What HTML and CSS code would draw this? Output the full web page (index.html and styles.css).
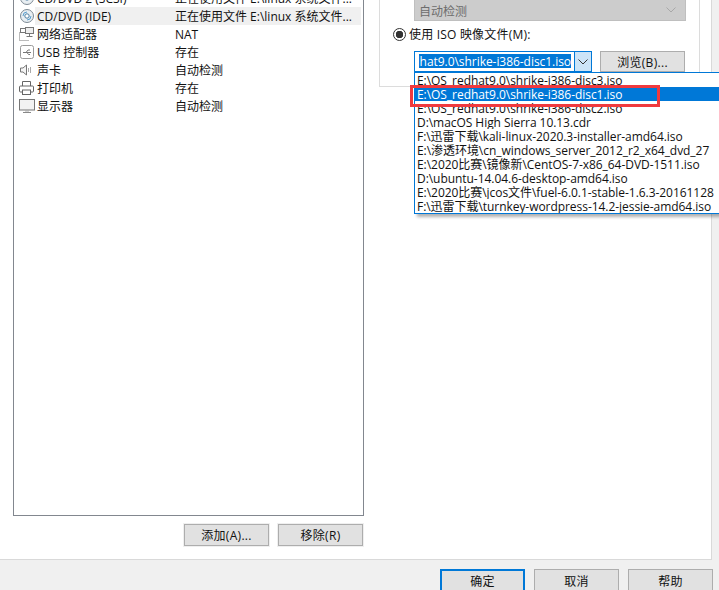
FILE: index.html
```html
<!doctype html>
<html lang="zh-CN">
  <head>
    <meta charset="utf-8">
    <title>虚拟机设置</title>
    <link rel="stylesheet" href="styles.css">
  </head>
  <body>
    <div class="panel">
      <div class="devices">
        <div class="device-list">
          <div class="row">
            <svg class="icon" viewBox="0 0 16 16"><circle cx="8" cy="8" r="6.5" fill="#e8eef2" stroke="#7d8a94"/><circle cx="8" cy="8" r="2.2" fill="#fff" stroke="#4d7fa3"/></svg>
            <span class="name">CD/DVD 2 (SCSI)</span><span class="summary">正在使用文件 E:\linux 系统文件...</span>
          </div>
          <div class="row selected">
            <svg class="icon" viewBox="0 0 16 16"><circle cx="8" cy="8" r="6.5" fill="#e8eef2" stroke="#7d8a94"/><path d="M4 8a4 4 0 0 1 4-4" fill="none" stroke="#5aa0d0"/><path d="M12 8a4 4 0 0 1-4 4" fill="none" stroke="#5aa0d0"/><circle cx="8" cy="8" r="2.2" fill="#fff" stroke="#4d7fa3"/></svg>
            <span class="name">CD/DVD (IDE)</span><span class="summary">正在使用文件 E:\linux 系统文件...</span>
          </div>
          <div class="row">
            <svg class="icon" viewBox="0 0 16 16" fill="none" stroke="#777"><path d="M.5 6.500v8h9" stroke-dasharray="1 1"/><rect x="1.500" y="2.500" width="5" height="4" fill="#fff"/><rect x="6.500" y="1.500" width="8" height="6" fill="#eee"/><path d="M10.500 7.500v3M7.500 10.500h6"/></svg>
            <span class="name">网络适配器</span><span class="summary">NAT</span>
          </div>
          <div class="row">
            <svg class="icon" viewBox="0 0 16 16" fill="none" stroke="#999"><rect x="1.500" y="1.500" width="13" height="13" rx="2"/><path d="M4 8.500h8M7 8.500l2-2.500h2M8 8.500l1.500 2H11" stroke="#777"/></svg>
            <span class="name">USB 控制器</span><span class="summary">存在</span>
          </div>
          <div class="row">
            <svg class="icon" viewBox="0 0 16 16" fill="none" stroke="#777"><path d="M1.500 6h2.500l3.500-3v10L4 10H1.500z" fill="#f4f4f4"/><path d="M9.500 6v4M11.500 5v6" stroke="#aaa"/></svg>
            <span class="name">声卡</span><span class="summary">自动检测</span>
          </div>
          <div class="row">
            <svg class="icon" viewBox="0 0 16 16" fill="none" stroke="#666"><path d="M3.500 6V1.500h8V6"/><rect x=".5" y="6" width="14" height="6" rx="1"/><rect x="3.500" y="10" width="8" height="4.500" fill="#fff"/></svg>
            <span class="name">打印机</span><span class="summary">存在</span>
          </div>
          <div class="row">
            <svg class="icon" viewBox="0 0 16 16" fill="none"><rect x=".5" y="1.500" width="15" height="10.500" fill="#f2f2f2" stroke="#777"/><path d="M4 14.500h8" stroke="#888"/><path d="M7 12v2M9 12v2" stroke="#aaa"/></svg>
            <span class="name">显示器</span><span class="summary">自动检测</span>
          </div>
        </div>
        <div class="list-buttons">
          <button class="btn outer" type="button">添加(A)...</button>
          <button class="btn outer" type="button">移除(R)</button>
        </div>
      </div>
      <div class="media-group">
        <div class="disabled-select">
          <span class="disabled-label">自动检测</span>
          <svg class="chevron" viewBox="0 0 10 6" fill="none" stroke="#a8a8a8"><path d="M.5 .5 5 5l4.500-4.500"/></svg>
        </div>
        <label class="radio-row"><span class="radio"></span>使用 ISO 映像文件(M):</label>
        <div class="file-row">
          <div class="combo">
            <div class="combo-text"><span>E:\OS_redhat9.0\shrike-i386-disc1.iso</span></div>
            <div class="combo-arrow"><svg class="chevron" viewBox="0 0 10 6" fill="none" stroke="#333"><path d="M.5 .5 5 5l4.500-4.500"/></svg></div>
            <ul class="dropdown">
              <li>E:\OS_redhat9.0\shrike-i386-disc3.iso</li>
              <li class="active">E:\OS_redhat9.0\shrike-i386-disc1.iso</li>
              <li>E:\OS_redhat9.0\shrike-i386-disc2.iso</li>
              <li>D:\macOS High Sierra 10.13.cdr</li>
              <li>F:\迅雷下载\kali-linux-2020.3-installer-amd64.iso</li>
              <li>E:\渗透环境\cn_windows_server_2012_r2_x64_dvd_27</li>
              <li>E:\2020比赛\镜像新\CentOS-7-x86_64-DVD-1511.iso</li>
              <li>D:\ubuntu-14.04.6-desktop-amd64.iso</li>
              <li>E:\2020比赛\jcos文件\fuel-6.0.1-stable-1.6.3-20161128</li>
              <li>F:\迅雷下载\turnkey-wordpress-14.2-jessie-amd64.iso</li>
            </ul>
            <div class="red-box"></div>
          </div>
          <button class="btn browse" type="button">浏览(B)...</button>
        </div>
      </div>
    </div>
    <div class="footer">
      <button class="btn primary" type="button">确定</button>
      <button class="btn" type="button">取消</button>
      <button class="btn" type="button">帮助</button>
    </div>
  </body>
</html>
```

FILE: styles.css
```css
html, body {
  margin: 0;
  height: 590px;
  overflow: hidden;
}
body {
  width: 719px;
  background-color: #f0f0f0;
  font-family: "Open Sans", "Noto Sans CJK SC", sans-serif;
  font-size: 12px;
  color: #111;
}
.panel {
  display: flex;
  box-sizing: border-box;
  width: 712px;
  height: 560px;
  background-color: #fff;
  border-right: 1px solid #d9d9d9;
  border-bottom: 1px solid #d9d9d9;
}
.devices {
  margin: -12px 0 0 13px;
  width: 351px;
}
.device-list {
  box-sizing: border-box;
  height: 528px;
  padding: 0 2px 0 5px;
  border: 1px solid #82878f;
}
.row {
  display: flex;
  align-items: center;
  height: 18px;
  white-space: nowrap;
}
.row.selected .name, .row.selected .summary {
  background-color: #f0f0f0;
}
.icon {
  flex: none;
  width: 16px;
  height: 16px;
}
.name {
  width: 140px;
  padding-left: 2px;
  box-sizing: border-box;
  height: 18px;
  line-height: 20px;
}
.summary {
  flex: 1;
  height: 18px;
  line-height: 20px;
}
.list-buttons {
  display: flex;
  justify-content: flex-end;
  gap: 9px;
  margin-top: 8px;
  padding-right: 1px;
}
.btn {
  box-sizing: border-box;
  width: 85px;
  height: 22px;
  padding: 0;
  border: 1px solid #adadad;
  background-color: #e1e1e1;
  font: inherit;
  letter-spacing: .3px;
  color: #111;
}
.btn.outer {
  box-shadow: 0 0 0 1px #efefef;
}
.media-group {
  box-sizing: border-box;
  width: 321px;
  height: 87px;
  margin: 0 0 0 15px;
  padding-left: 13px;
  border: 1px solid #dcdcdc;
  border-top: 0;
}
.disabled-select {
  display: flex;
  align-items: center;
  justify-content: space-between;
  box-sizing: border-box;
  width: 272px;
  height: 21px;
  margin: 0 0 0 21px;
  padding: 0 9px 0 4px;
  background-color: #cccccc;
  border: 1px solid #bfbfbf;
  border-top: 0;
  color: #6d6d6d;
}
.disabled-label {
  padding-top: 2px;
}
.chevron {
  width: 10px;
  height: 6px;
}
.radio-row {
  display: flex;
  align-items: center;
  height: 18px;
  margin-top: 4px;
  letter-spacing: .2px;
}
.radio {
  box-sizing: border-box;
  width: 13px;
  height: 13px;
  margin-right: 3px;
  border: 1px solid #333;
  border-radius: 50%;
  background: radial-gradient(circle, #333 0 3.5px, #fff 4px);
}
.file-row {
  display: flex;
  gap: 8px;
  margin: 8px 0 0 21px;
}
.combo {
  position: relative;
  display: flex;
  box-sizing: border-box;
  width: 178px;
  height: 21px;
  border: 1px solid #0078d7;
}
.combo-text {
  display: flex;
  justify-content: flex-end;
  width: 152px;
  height: 14px;
  line-height: 16px;
  margin: 2px 3px 0 4px;
  overflow: hidden;
  white-space: nowrap;
  background-color: #0078d7;
  color: #fff;
  letter-spacing: -.05px;
}
.combo-arrow {
  display: flex;
  align-items: center;
  justify-content: center;
  width: 16px;
  background-color: #cce4f7;
  border-left: 1px solid #0078d7;
}
.browse {
  height: 21px;
}
.dropdown {
  position: absolute;
  top: 20px;
  left: -1px;
  width: 320px;
  margin: 0;
  padding: 0;
  list-style: none;
  background-color: #fff;
  border: 1px solid #0078d7;
  box-shadow: 3px 3px 3px rgba(0, 0, 0, .3);
}
.dropdown li {
  height: 14px;
  line-height: 16px;
  padding-left: 2px;
  white-space: nowrap;
  overflow: hidden;
  letter-spacing: -.05px;
}
.dropdown li.active {
  background-color: #0078d7;
  color: #fff;
}
.red-box {
  position: absolute;
  top: 33px;
  left: -5px;
  width: 244px;
  height: 16px;
  border: 3px solid #f03a3e;
}
.footer {
  display: flex;
  justify-content: flex-end;
  gap: 9px;
  padding: 9px 6px 0 0;
}
.footer .btn {
  height: 24px;
}
.footer .primary {
  border: 2px solid #0078d7;
}
```
